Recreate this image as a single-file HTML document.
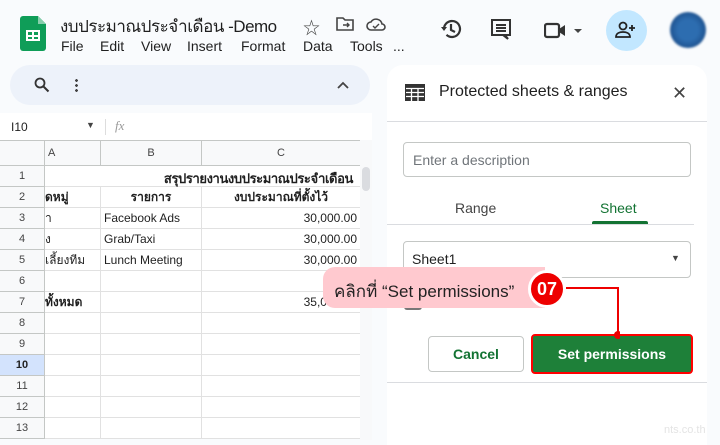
<!DOCTYPE html>
<html><head><meta charset="utf-8"><style>
*{margin:0;padding:0;box-sizing:border-box}
body{width:720px;height:440px;overflow:hidden;background:#f9fbfd;font-family:"Liberation Sans","Noto Sans CJK SC",sans-serif;position:relative;color:#1f1f1f}
.a{position:absolute}
.menu span{position:absolute;white-space:nowrap}
table{border-collapse:collapse;font-size:12px;table-layout:fixed}
td{border:1px solid #e1e1e1;height:21px;padding:0 3px;white-space:nowrap;overflow:hidden;background:#fff}
.rh{background:#f8f9fa;color:#444;text-align:center;font-size:11px;border-color:#c4c7c5}
.ch{background:#f8f9fa;color:#444;text-align:center;font-size:11px;height:25px;border-color:#c4c7c5}
.b{font-weight:bold}
.r{text-align:right}
</style></head><body>
<svg class="a" style="left:20px;top:16px" width="26" height="35" viewBox="0 0 26 35"><path d="M3 0h15l8 8v24a3 3 0 0 1-3 3H3a3 3 0 0 1-3-3V3a3 3 0 0 1 3-3z" fill="#0f9d58"/><path d="M18 0v8h8z" fill="#87ceac"/><rect x="6" y="14" width="14" height="11" fill="#fff"/><path d="M8 16h4v3H8zm6 0h4v3h-4zm-6 5h4v2H8zm6 0h4v2h-4z" fill="#0f9d58"/></svg>
<div class="a" style="left:60px;top:13px;font-size:17px;letter-spacing:-0.5px;white-space:nowrap">งบประมาณประจำเดือน -Demo</div>
<div class="a" style="left:303px;top:14px;font-size:17px;color:#444">☆</div>
<svg class="a" style="left:336px;top:16px" width="18" height="16"><path d="M1 2h6l2 2h8v10H1z" fill="none" stroke="#444" stroke-width="1.6"/><path d="M7 9h6m-2-2 2 2-2 2" stroke="#444" stroke-width="1.4" fill="none"/></svg>
<svg class="a" style="left:366px;top:16px" width="20" height="16"><path d="M5 14a4 4 0 0 1 0-8 6 6 0 0 1 11 2 3 3 0 0 1 0 6z" fill="none" stroke="#444" stroke-width="1.6"/><path d="M7 10l2 2 4-4" stroke="#444" stroke-width="1.4" fill="none"/></svg>
<div class="a menu" style="left:0;top:38px;font-size:14px"><span style="left:61px">File</span><span style="left:100px">Edit</span><span style="left:141px">View</span><span style="left:187px">Insert</span><span style="left:241px">Format</span><span style="left:303px">Data</span><span style="left:350px">Tools</span><span style="left:393px">...</span></div>
<svg class="a" style="left:440px;top:18px" width="22" height="22" viewBox="0 0 22 22"><path d="M4 11a8 8 0 1 1 2.5 5.8" fill="none" stroke="#333" stroke-width="2.2"/><path d="M1 9l3 4 3-4z" fill="#333"/><path d="M11 6v6l4 2" stroke="#333" stroke-width="2.2" fill="none"/></svg>
<svg class="a" style="left:491px;top:19px" width="20" height="22"><path d="M1 1h18v15H14l3 4-5-4H1z" fill="none" stroke="#333" stroke-width="2"/><path d="M5 6h10M5 9h10M5 12h10" stroke="#333" stroke-width="2"/></svg>
<svg class="a" style="left:544px;top:21px" width="42" height="18"><rect x="1" y="3" width="14" height="13" rx="2" fill="none" stroke="#333" stroke-width="2.2"/><path d="M15 8l6-4v11l-6-4z" fill="#333"/><path d="M30 8h8l-4 4z" fill="#444"/></svg>
<div class="a" style="left:606px;top:10px;width:41px;height:41px;border-radius:50%;background:#c2e7ff"></div>
<svg class="a" style="left:615px;top:20px" width="22" height="20"><circle cx="8" cy="6" r="3.5" fill="none" stroke="#222" stroke-width="1.8"/><path d="M1 17c0-4 4-5 7-5s7 1 7 5z" fill="none" stroke="#222" stroke-width="1.8"/><path d="M17 5v6M14 8h6" stroke="#222" stroke-width="1.8"/></svg>
<div class="a" style="left:670px;top:12px;width:36px;height:36px;border-radius:50%;background:radial-gradient(circle,#2d6db0 40%,#1c4f8c 75%,#a9bdd6 100%);filter:blur(1px)"></div>
<div class="a" style="left:10px;top:65px;width:360px;height:40px;border-radius:20px;background:#edf2fa"></div>
<svg class="a" style="left:34px;top:77px" width="16" height="16"><circle cx="6" cy="6" r="4.5" fill="none" stroke="#333" stroke-width="1.8"/><path d="M9.5 9.5l5 5" stroke="#333" stroke-width="2"/></svg>
<div class="a" style="left:75px;top:78px;width:3px;height:14px;background:radial-gradient(circle,#444 1.3px,transparent 1.5px) 0 0/3px 5px"></div>
<svg class="a" style="left:337px;top:81px" width="12" height="8"><path d="M1 7l5-5 5 5" fill="none" stroke="#444" stroke-width="1.8"/></svg>
<div class="a" style="left:0;top:113px;width:372px;height:27px;background:#fff"></div>
<div class="a" style="left:11px;top:120px;font-size:12px">I10</div>
<div class="a" style="left:86px;top:120px;font-size:9px;color:#444">▼</div>
<div class="a" style="left:105px;top:119px;width:1px;height:16px;background:#ddd"></div>
<div class="a" style="left:115px;top:118px;font-size:13px;color:#999;font-style:italic;font-family:'Liberation Serif',serif">fx</div>
<table class="a" style="left:-1px;top:140px;width:361px">
<colgroup><col style="width:45px"><col style="width:56px"><col style="width:101px"><col style="width:159px"></colgroup>
<tr><td class="ch"></td><td class="ch" style="text-align:left">A</td><td class="ch">B</td><td class="ch">C</td></tr>
<tr><td class="rh">1</td><td style="border-right:none"></td><td style="border-right:none;border-left:none"></td><td style="border-left:none"></td></tr>
<tr><td class="rh">2</td><td class="b" style="padding:0">ดหมู่</td><td class="b" style="text-align:center">รายการ</td><td class="b" style="text-align:center">งบประมาณที่ตั้งไว้</td></tr>
<tr><td class="rh">3</td><td style="padding:0">า</td><td>Facebook Ads</td><td class="r">30,000.00</td></tr>
<tr><td class="rh">4</td><td style="padding:0">ง</td><td>Grab/Taxi</td><td class="r">30,000.00</td></tr>
<tr><td class="rh">5</td><td style="padding:0">เลี้ยงทีม</td><td>Lunch Meeting</td><td class="r">30,000.00</td></tr>
<tr><td class="rh">6</td><td></td><td></td><td></td></tr>
<tr><td class="rh">7</td><td class="b" style="padding:0">ทั้งหมด</td><td></td><td class="r">35,000.00</td></tr>
<tr><td class="rh">8</td><td></td><td></td><td></td></tr>
<tr><td class="rh">9</td><td></td><td></td><td></td></tr>
<tr><td class="rh b" style="background:#d3e3fd;color:#222">10</td><td></td><td></td><td></td></tr>
<tr><td class="rh">11</td><td></td><td></td><td></td></tr>
<tr><td class="rh">12</td><td></td><td></td><td></td></tr>
<tr><td class="rh">13</td><td></td><td></td><td></td></tr>
</table>
<div class="a b" style="left:100px;top:168px;width:253px;text-align:right;font-size:13px;letter-spacing:-0.4px;white-space:nowrap">สรุปรายงานงบประมาณประจำเดือน</div>
<div class="a" style="left:360px;top:140px;width:12px;height:300px;background:#f8f9fa"></div>
<div class="a" style="left:362px;top:167px;width:8px;height:24px;border-radius:4px;background:#dadce0"></div>
<div class="a" style="left:387px;top:65px;width:320px;height:380px;background:#fff;border-radius:16px 16px 0 0"></div>
<svg class="a" style="left:405px;top:84px" width="20" height="17"><rect x="0" y="0" width="20" height="17" fill="#333"/><path d="M1 4.5h18M1 8.5h18M1 12.5h18M6.5 4v13M13 4v13" stroke="#fff" stroke-width="1.3"/></svg>
<div class="a" style="left:439px;top:83px;font-size:16px;color:#1f1f1f">Protected sheets &amp; ranges</div>
<div class="a" style="left:672px;top:83px;font-size:18px;color:#444">✕</div>
<div class="a" style="left:387px;top:121px;width:320px;height:1px;background:#dadce0"></div>
<div class="a" style="left:403px;top:142px;width:288px;height:35px;border:1px solid #c4c7c5;border-radius:4px"></div>
<div class="a" style="left:413px;top:152px;font-size:14px;color:#70757a">Enter a description</div>
<div class="a" style="left:455px;top:200px;font-size:14px;color:#444">Range</div>
<div class="a" style="left:600px;top:200px;font-size:14px;color:#137333">Sheet</div>
<div class="a" style="left:592px;top:221px;width:56px;height:3px;border-radius:2px 2px 0 0;background:#137333"></div>
<div class="a" style="left:387px;top:224px;width:307px;height:1px;background:#dadce0"></div>
<div class="a" style="left:403px;top:241px;width:288px;height:37px;border:1px solid #c4c7c5;border-radius:4px"></div>
<div class="a" style="left:412px;top:251px;font-size:14px">Sheet1</div>
<div class="a" style="left:671px;top:253px;font-size:9px;color:#444">▼</div>
<div class="a" style="left:404px;top:298px;width:18px;height:12px;border-radius:3px;background:#777"></div>
<div class="a" style="left:428px;top:336px;width:96px;height:36px;border:1px solid #c4c7c5;border-radius:4px;background:#fff;color:#137333;font-size:14px;font-weight:bold;text-align:center;line-height:34px">Cancel</div>
<div class="a" style="left:531px;top:334px;width:162px;height:40px;border:2px solid #f00;border-radius:4px;background:#1e8039;color:#fff;font-size:14px;font-weight:bold;text-align:center;line-height:36px">Set permissions</div>
<div class="a" style="left:387px;top:382px;width:320px;height:1px;background:#dadce0"></div>
<div class="a" style="left:323px;top:267px;width:222px;height:41px;background:#ffc9cf;border-radius:12px 0 0 12px"></div>
<div class="a" style="left:334px;top:278px;font-size:17px;color:#222;white-space:nowrap">คลิกที่ “Set permissions”</div>
<div class="a" style="left:528px;top:270px;width:38px;height:38px;border-radius:50%;background:#e00;border:3px solid #fff;color:#fff;font-weight:bold;font-size:18px;text-align:center;line-height:32px">07</div>
<svg class="a" style="left:560px;top:285px" width="60" height="56"><path d="M6 3h52v49" fill="none" stroke="#e00" stroke-width="2"/><circle cx="58" cy="50" r="4" fill="#e00"/></svg>
<div class="a" style="left:664px;top:424px;font-size:11px;color:#e4e4e4">nts.co.th</div>
</body></html>
